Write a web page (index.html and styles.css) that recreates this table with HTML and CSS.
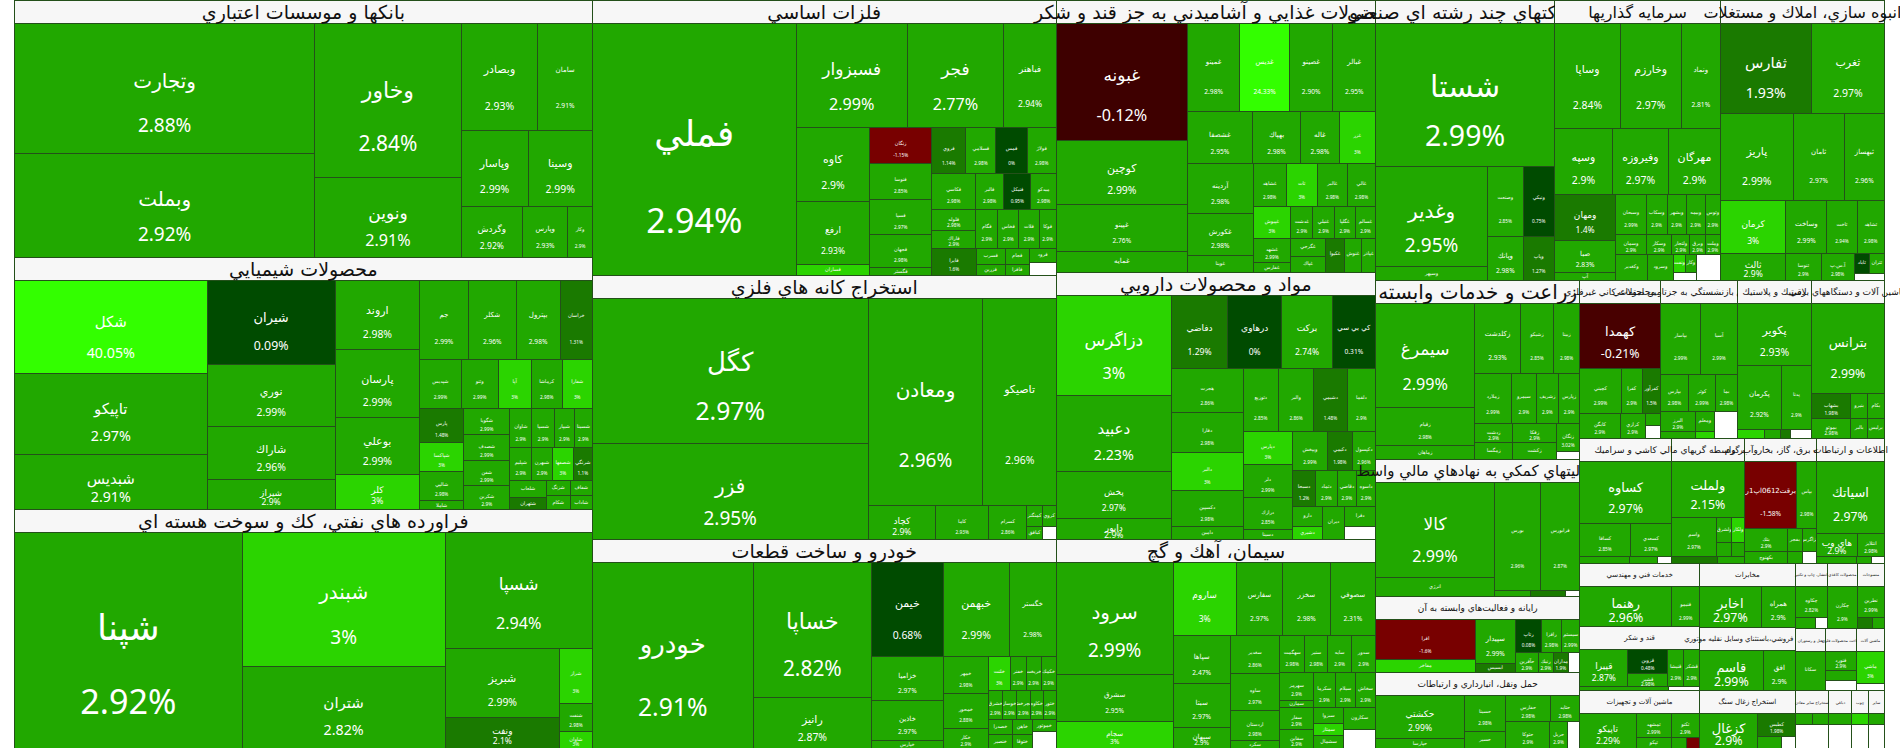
FILE: index.html
```html
<!DOCTYPE html>
<html lang="fa">
<head>
<meta charset="utf-8">
<title>نقشه بازار</title>
<link rel="stylesheet" href="styles.css">
</head>
<body>
<div class="map">

<!-- COLUMN 1 -->
<div class="c" style="flex:578">
  <div class="c sec" style="flex:257">
    <div class="hd h1"><span>بانکها و موسسات اعتباري</span></div>
    <div class="r bd">
      <div class="c" style="flex:301">
        <div class="t g s5" style="flex:130"><b>وتجارت</b><i>2.88%</i></div>
        <div class="t g s5" style="flex:104"><b>وبملت</b><i>2.92%</i></div>
      </div>
      <div class="c" style="flex:146">
        <div class="t g s4" style="flex:154"><b>وخاور</b><i>2.84%</i></div>
        <div class="t g s6" style="flex:80"><b>ونوين</b><i>2.91%</i></div>
      </div>
      <div class="c" style="flex:131">
        <div class="r" style="flex:107">
          <div class="t g s9" style="flex:77"><b>وبصادر</b><i>2.93%</i></div>
          <div class="t g s11" style="flex:54"><b>سامان</b><i>2.91%</i></div>
        </div>
        <div class="r" style="flex:76">
          <div class="t g s9" style="flex:67"><b>وپاسار</b><i>2.99%</i></div>
          <div class="t g s9" style="flex:64"><b>وسينا</b><i>2.99%</i></div>
        </div>
        <div class="r" style="flex:51">
          <div class="t g s10" style="flex:62"><b>وگردش</b><i>2.92%</i></div>
          <div class="t g s11" style="flex:45"><b>وپارس</b><i>2.93%</i></div>
          <div class="t g s12" style="flex:24"><b>وکار</b><i>2.9%</i></div>
        </div>
      </div>
    </div>
  </div>

  <div class="c sec" style="flex:252">
    <div class="hd h1"><span>محصولات شيميايي</span></div>
    <div class="r bd">
      <div class="c" style="flex:193">
        <div class="t b2 s7" style="flex:94"><b>شكل</b><i>40.05%</i></div>
        <div class="t g s7" style="flex:81"><b>تاپيكو</b><i>2.97%</i></div>
        <div class="t g s7" style="flex:55"><b>شبديس</b><i>2.91%</i></div>
      </div>
      <div class="c" style="flex:128">
        <div class="t d0 s8" style="flex:85"><b>شيران</b><i>0.09%</i></div>
        <div class="t g s9" style="flex:62"><b>نوري</b><i>2.99%</i></div>
        <div class="t g s9" style="flex:53"><b>شاراك</b><i>2.96%</i></div>
        <div class="t g s10" style="flex:30"><b>شيراز</b><i>2.9%</i></div>
      </div>
      <div class="c" style="flex:84">
        <div class="t g s9" style="flex:70"><b>اروند</b><i>2.98%</i></div>
        <div class="t g s9" style="flex:68"><b>پارسان</b><i>2.99%</i></div>
        <div class="t g s9" style="flex:57"><b>بوعلي</b><i>2.99%</i></div>
        <div class="t b s10" style="flex:35"><b>كلر</b><i>3%</i></div>
      </div>
      <div class="c" style="flex:173">
        <div class="r" style="flex:79">
          <div class="t g s11" style="flex:49"><b>جم</b><i>2.99%</i></div>
          <div class="t g s11" style="flex:48"><b>شكلر</b><i>2.96%</i></div>
          <div class="t g s11" style="flex:44"><b>بپترول</b><i>2.98%</i></div>
          <div class="t d1 s12" style="flex:32"><b>خراسان</b><i>1.31%</i></div>
        </div>
        <div class="r" style="flex:49">
          <div class="t g s12" style="flex:42"><b>شپديس</b><i>2.99%</i></div>
          <div class="t g s12" style="flex:37"><b>وثنو</b><i>2.99%</i></div>
          <div class="t b s12" style="flex:33"><b>آپا</b><i>3%</i></div>
          <div class="t g s12" style="flex:31"><b>كرماشا</b><i>2.98%</i></div>
          <div class="t b s12" style="flex:30"><b>شفارا</b><i>3%</i></div>
        </div>
        <div class="r" style="flex:102">
          <div class="c" style="flex:44">
            <div class="t d1 s12" style="flex:35"><b>پارس</b><i>1.48%</i></div>
            <div class="t b s12" style="flex:29"><b>شپاكسا</b><i>3%</i></div>
            <div class="t g s12" style="flex:30"><b>شالپي</b><i>2.98%</i></div>
            <div class="t g s12" style="flex:8"><b>شاملا</b><i></i></div>
          </div>
          <div class="c" style="flex:46">
            <div class="t g s12" style="flex:27"><b>شگويا</b><i>2.99%</i></div>
            <div class="t g s12" style="flex:26"><b>شصدف</b><i>2.99%</i></div>
            <div class="t g s12" style="flex:25"><b>شفن</b><i>2.99%</i></div>
            <div class="t g s12" style="flex:24"><b>شكربن</b><i>2.9%</i></div>
          </div>
          <div class="c" style="flex:83">
            <div class="r" style="flex:40">
              <div class="t g s12" style="flex:22"><b>شاوان</b><i>2.9%</i></div>
              <div class="t g s12" style="flex:23"><b>شسپا</b><i>2.9%</i></div>
              <div class="t g s12" style="flex:20"><b>شيپار</b><i>2.9%</i></div>
              <div class="t g s12" style="flex:18"><b>شسينا</b><i>2.9%</i></div>
            </div>
            <div class="r" style="flex:33">
              <div class="t g s12" style="flex:22"><b>شپليم</b><i>2.9%</i></div>
              <div class="t g s12" style="flex:21"><b>شبهرن</b><i>2.9%</i></div>
              <div class="t b s12" style="flex:21"><b>شصفها</b><i>3%</i></div>
              <div class="t d1 s12" style="flex:19"><b>شرنگي</b><i>1.1%</i></div>
            </div>
            <div class="r" style="flex:29">
              <div class="c" style="flex:37">
                <div class="t g s12" style="flex:17"><b>شلعاب</b><i></i></div>
                <div class="t d1 s12" style="flex:12"><b>شتهران</b><i></i></div>
              </div>
              <div class="c" style="flex:24">
                <div class="t g s12" style="flex:15"><b>شزنگ</b><i></i></div>
                <div class="t g s12" style="flex:14"><b>شكام</b><i></i></div>
              </div>
              <div class="c" style="flex:22">
                <div class="t g s12" style="flex:15"><b>شفاف</b><i></i></div>
                <div class="t g s12" style="flex:14"><b>شاداب</b><i></i></div>
              </div>
            </div>
          </div>
        </div>
      </div>
    </div>
  </div>

  <div class="c sec" style="flex:239">
    <div class="hd h1"><span>فراورده هاي نفتي، كك و سوخت هسته اي</span></div>
    <div class="r bd">
      <div class="t g s1" style="flex:228"><b>شپنا</b><i>2.92%</i></div>
      <div class="c" style="flex:203">
        <div class="t b s5" style="flex:135"><b>شبندر</b><i>3%</i></div>
        <div class="t g s7" style="flex:82"><b>شتران</b><i>2.82%</i></div>
      </div>
      <div class="c" style="flex:147">
        <div class="t g s6" style="flex:117"><b>شسپا</b><i>2.94%</i></div>
        <div class="r" style="flex:100">
          <div class="c" style="flex:115">
            <div class="t g s9" style="flex:69"><b>شبريز</b><i>2.99%</i></div>
            <div class="t d1 s10" style="flex:31"><b>ونفت</b><i>2.1%</i></div>
          </div>
          <div class="c" style="flex:32">
            <div class="t b s12" style="flex:55"><b>شراز</b><i>3%</i></div>
            <div class="t g s12" style="flex:28"><b>شنفت</b><i>2.98%</i></div>
            <div class="t b s12" style="flex:17"><b>شاوان</b><i>3%</i></div>
          </div>
        </div>
      </div>
    </div>
  </div>
</div>

<!-- COLUMN 2 -->
<div class="c" style="flex:464">
  <div class="c sec" style="flex:275">
    <div class="hd h1"><span>فلزات اساسي</span></div>
    <div class="r bd">
      <div class="t g s1" style="flex:204"><b>فملي</b><i>2.94%</i></div>
      <div class="c" style="flex:260">
        <div class="r" style="flex:104">
          <div class="t g s6" style="flex:111"><b>فسبزوار</b><i>2.99%</i></div>
          <div class="t g s6" style="flex:97"><b>فجر</b><i>2.77%</i></div>
          <div class="t g s10" style="flex:52"><b>فباهنر</b><i>2.94%</i></div>
        </div>
        <div class="r" style="flex:148">
          <div class="c" style="flex:73">
            <div class="t g s9" style="flex:75"><b>كاوه</b><i>2.9%</i></div>
            <div class="t g s10" style="flex:63"><b>ارفع</b><i>2.93%</i></div>
            <div class="t b s12" style="flex:10"><b>فسازان</b><i></i></div>
          </div>
          <div class="c" style="flex:62">
            <div class="t r1 s12" style="flex:36"><b>زنگان</b><i>-1.15%</i></div>
            <div class="t g s12" style="flex:36"><b>فنوسا</b><i>2.85%</i></div>
            <div class="t g s12" style="flex:36"><b>فسپا</b><i>2.97%</i></div>
            <div class="t g s12" style="flex:33"><b>فجهان</b><i>2.98%</i></div>
            <div class="t g s12" style="flex:7"><b>فگستر</b><i></i></div>
          </div>
          <div class="c" style="flex:125">
            <div class="r" style="flex:46">
              <div class="t d1 s12" style="flex:34"><b>فروي</b><i>1.14%</i></div>
              <div class="t g s12" style="flex:30"><b>فسلامي</b><i>2.98%</i></div>
              <div class="t d0 s12" style="flex:31"><b>فمس</b><i>0%</i></div>
              <div class="t g s12" style="flex:29"><b>فولاژ</b><i>2.98%</i></div>
            </div>
            <div class="r" style="flex:36">
              <div class="t g s12" style="flex:44"><b>فكاسي</b><i>2.98%</i></div>
              <div class="t g s12" style="flex:28"><b>فالبر</b><i>2.98%</i></div>
              <div class="t d0 s12" style="flex:27"><b>فنيكل</b><i>0.95%</i></div>
              <div class="t g s12" style="flex:25"><b>ميدكو</b><i>2.98%</i></div>
            </div>
            <div class="r" style="flex:39">
              <div class="c" style="flex:45">
                <div class="t g s12" style="flex:21"><b>فلوله</b><i>2.98%</i></div>
                <div class="t g s12" style="flex:18"><b>فاراك</b><i>2.9%</i></div>
              </div>
              <div class="t g s12" style="flex:22"><b>فگام</b><i>2.9%</i></div>
              <div class="t g s12" style="flex:21"><b>فخاس</b><i>2.9%</i></div>
              <div class="t g s12" style="flex:20"><b>فلات</b><i>2.9%</i></div>
              <div class="t g s12" style="flex:17"><b>فوكا</b><i>2.9%</i></div>
            </div>
            <div class="r" style="flex:27">
              <div class="t d1 s12" style="flex:45"><b>فايرا</b><i>1.6%</i></div>
              <div class="c" style="flex:29">
                <div class="t g s12" style="flex:16"><b>فسرب</b><i></i></div>
                <div class="t g s12" style="flex:11"><b>فزرين</b><i></i></div>
              </div>
              <div class="c" style="flex:24">
                <div class="t g s12" style="flex:16"><b>فجام</b><i></i></div>
                <div class="t g s12" style="flex:11"><b>فافزا</b><i></i></div>
              </div>
              <div class="c" style="flex:27">
                <div class="t g s12" style="flex:14"><b>فرود</b><i></i></div>
                <div class="w" style="flex:13"></div>
              </div>
            </div>
          </div>
        </div>
      </div>
    </div>
  </div>

  <div class="c sec" style="flex:264">
    <div class="hd h1"><span>استخراج كانه هاي فلزي</span></div>
    <div class="r bd">
      <div class="c" style="flex:276">
        <div class="t g s3" style="flex:146"><b>كگل</b><i>2.97%</i></div>
        <div class="t g s5" style="flex:96"><b>فزر</b><i>2.95%</i></div>
      </div>
      <div class="c" style="flex:188">
        <div class="r" style="flex:209">
          <div class="t g s5" style="flex:115"><b>ومعادن</b><i>2.96%</i></div>
          <div class="t g s9" style="flex:73"><b>تاصيكو</b><i>2.96%</i></div>
        </div>
        <div class="r" style="flex:33">
          <div class="t g s10" style="flex:68"><b>كچاد</b><i>2.9%</i></div>
          <div class="t g s12" style="flex:53"><b>كاما</b><i>2.93%</i></div>
          <div class="t g s12" style="flex:38"><b>كسرام</b><i>2.86%</i></div>
          <div class="c" style="flex:29">
            <div class="r" style="flex:20">
              <div class="t g s12" style="flex:15"><b>كمنگنز</b><i></i></div>
              <div class="t g s12" style="flex:14"><b>كروي</b><i></i></div>
            </div>
            <div class="r" style="flex:12">
              <div class="t g s12" style="flex:15"><b>كبافق</b><i></i></div>
              <div class="w" style="flex:14"></div>
            </div>
          </div>
        </div>
      </div>
    </div>
  </div>

  <div class="c sec" style="flex:209">
    <div class="hd h1"><span>خودرو و ساخت قطعات</span></div>
    <div class="r bd">
      <div class="t g s3" style="flex:161"><b>خودرو</b><i>2.91%</i></div>
      <div class="c" style="flex:118">
        <div class="t g s4" style="flex:136"><b>خساپا</b><i>2.82%</i></div>
        <div class="t g s9" style="flex:50"><b>رانيز</b><i>2.87%</i></div>
      </div>
      <div class="c" style="flex:185">
        <div class="r" style="flex:94">
          <div class="t d0 s9" style="flex:72"><b>خيمن</b><i>0.68%</i></div>
          <div class="t g s9" style="flex:66"><b>خبهمن</b><i>2.99%</i></div>
          <div class="t g s11" style="flex:47"><b>خگستر</b><i>2.98%</i></div>
        </div>
        <div class="r" style="flex:92">
          <div class="c" style="flex:72">
            <div class="t g s11" style="flex:45"><b>خزاميا</b><i>2.97%</i></div>
            <div class="t g s11" style="flex:40"><b>خاذين</b><i>2.97%</i></div>
            <div class="t g s12" style="flex:7"><b>خپارس</b><i></i></div>
          </div>
          <div class="c" style="flex:45">
            <div class="t g s12" style="flex:37"><b>خمهر</b><i>2.98%</i></div>
            <div class="t g s12" style="flex:35"><b>خمحور</b><i>2.88%</i></div>
            <div class="t g s12" style="flex:20"><b>خكار</b><i>2.9%</i></div>
          </div>
          <div class="c" style="flex:68">
            <div class="r" style="flex:34">
              <div class="t b s12" style="flex:22"><b>خلنت</b><i>3%</i></div>
              <div class="t g s12" style="flex:16"><b>خفنر</b><i>2.9%</i></div>
              <div class="t g s12" style="flex:15"><b>خريخت</b><i>2.9%</i></div>
              <div class="t g s12" style="flex:15"><b>خكمك</b><i>2.9%</i></div>
            </div>
            <div class="r" style="flex:29">
              <div class="t g s12" style="flex:14"><b>خشرق</b><i>2.9%</i></div>
              <div class="t g s12" style="flex:14"><b>خوساز</b><i>2.9%</i></div>
              <div class="t g s12" style="flex:14"><b>خچرخش</b><i>2.9%</i></div>
              <div class="t g s12" style="flex:13"><b>خكاوه</b><i>2.9%</i></div>
              <div class="t g s12" style="flex:13"><b>ختور</b><i>2.9%</i></div>
            </div>
            <div class="r" style="flex:29">
              <div class="c" style="flex:24">
                <div class="t g s12" style="flex:15"><b>خصدرا</b><i></i></div>
                <div class="t g s12" style="flex:14"><b>خنصير</b><i></i></div>
              </div>
              <div class="c" style="flex:20">
                <div class="t g s12" style="flex:15"><b>خاهن</b><i></i></div>
                <div class="t g s12" style="flex:14"><b>ختوقا</b><i></i></div>
              </div>
              <div class="c" style="flex:24">
                <div class="t g s12" style="flex:12"><b>خموتور</b><i></i></div>
                <div class="w" style="flex:17"></div>
              </div>
            </div>
          </div>
        </div>
      </div>
    </div>
  </div>
</div>

<!-- COLUMN 3 -->
<div class="c" style="flex:319">
  <div class="c sec" style="flex:272">
    <div class="hd h1"><span>محصولات غذايي و آشاميدني به جز قند و شكر</span></div>
    <div class="r bd">
      <div class="c" style="flex:130">
        <div class="t r0 s6" style="flex:118"><b>غبونه</b><i>-0.12%</i></div>
        <div class="t g s9" style="flex:64"><b>كوچين</b><i>2.99%</i></div>
        <div class="t g s11" style="flex:47"><b>غپينو</b><i>2.76%</i></div>
        <div class="t g s11" style="flex:20"><b>غمايه</b><i></i></div>
      </div>
      <div class="c" style="flex:187">
        <div class="r" style="flex:88">
          <div class="t g s11" style="flex:52"><b>غمينو</b><i>2.98%</i></div>
          <div class="t b2 s11" style="flex:49"><b>غديس</b><i>24.33%</i></div>
          <div class="t g s11" style="flex:43"><b>غصينو</b><i>2.90%</i></div>
          <div class="t g s11" style="flex:42"><b>غبالر</b><i>2.95%</i></div>
        </div>
        <div class="r" style="flex:52">
          <div class="t g s11" style="flex:65"><b>غشصفا</b><i>2.95%</i></div>
          <div class="t g s11" style="flex:48"><b>بهپاك</b><i>2.98%</i></div>
          <div class="t g s11" style="flex:38"><b>غاله</b><i>2.98%</i></div>
          <div class="t b s12" style="flex:36"><b>غزر</b><i>3%</i></div>
        </div>
        <div class="r" style="flex:109">
          <div class="c" style="flex:65">
            <div class="t g s11" style="flex:50"><b>آردينه</b><i>2.98%</i></div>
            <div class="t g s11" style="flex:43"><b>غكورش</b><i>2.98%</i></div>
            <div class="t g s12" style="flex:16"><b>غوينا</b><i></i></div>
          </div>
          <div class="c" style="flex:122">
            <div class="r" style="flex:43">
              <div class="t g s12" style="flex:33"><b>غشاهد</b><i>2.98%</i></div>
              <div class="t b s12" style="flex:31"><b>تات</b><i>3%</i></div>
              <div class="t g s12" style="flex:30"><b>غالبر</b><i>2.98%</i></div>
              <div class="t g s12" style="flex:28"><b>غالي</b><i>2.98%</i></div>
            </div>
            <div class="r" style="flex:32">
              <div class="t b s12" style="flex:38"><b>غپيوش</b><i>3%</i></div>
              <div class="t g s12" style="flex:22"><b>غدشت</b><i>2.9%</i></div>
              <div class="t g s12" style="flex:21"><b>غنيلي</b><i>2.9%</i></div>
              <div class="t g s12" style="flex:21"><b>غگلپا</b><i>2.9%</i></div>
              <div class="t g s12" style="flex:20"><b>غسالم</b><i>2.9%</i></div>
            </div>
            <div class="r" style="flex:34">
              <div class="c" style="flex:38">
                <div class="t g s12" style="flex:24"><b>غشهد</b><i>2.99%</i></div>
                <div class="t g s12" style="flex:10"><b>غفارس</b><i></i></div>
              </div>
              <div class="c" style="flex:35">
                <div class="t g s12" style="flex:18"><b>غگرجي</b><i></i></div>
                <div class="t g s12" style="flex:16"><b>غپاك</b><i></i></div>
              </div>
              <div class="t d1 s12" style="flex:19"><b>غكيوا</b><i></i></div>
              <div class="t g s12" style="flex:16"><b>غنوش</b><i></i></div>
              <div class="t g s12" style="flex:14"><b>غپاذر</b><i></i></div>
            </div>
          </div>
        </div>
      </div>
    </div>
  </div>

  <div class="c sec" style="flex:267">
    <div class="hd h1"><span>مواد و محصولات دارويي</span></div>
    <div class="r bd">
      <div class="c" style="flex:114">
        <div class="t b s6" style="flex:101"><b>دزاگرس</b><i>3%</i></div>
        <div class="t g s7" style="flex:76"><b>دعبيد</b><i>2.23%</i></div>
        <div class="t g s10" style="flex:47"><b>پخش</b><i>2.97%</i></div>
        <div class="t g s10" style="flex:20"><b>دابور</b><i>2.9%</i></div>
      </div>
      <div class="c" style="flex:203">
        <div class="r" style="flex:73">
          <div class="t d1 s10" style="flex:56"><b>دفاضي</b><i>1.29%</i></div>
          <div class="t d0 s10" style="flex:54"><b>درهاوي</b><i>0%</i></div>
          <div class="t g s10" style="flex:50"><b>بركت</b><i>2.74%</i></div>
          <div class="t d0 s11" style="flex:43"><b>كي بي سي</b><i>0.31%</i></div>
        </div>
        <div class="r" style="flex:171">
          <div class="c" style="flex:71">
            <div class="t g s12" style="flex:44"><b>هجرت</b><i>2.86%</i></div>
            <div class="t g s12" style="flex:40"><b>دفارا</b><i>2.98%</i></div>
            <div class="t b s12" style="flex:39"><b>دالبر</b><i>3%</i></div>
            <div class="t g s12" style="flex:36"><b>دكسپين</b><i>2.98%</i></div>
            <div class="t g s12" style="flex:12"><b>دامين</b><i></i></div>
          </div>
          <div class="c" style="flex:132">
            <div class="r" style="flex:63">
              <div class="t g s12" style="flex:35"><b>دتوزيع</b><i>2.85%</i></div>
              <div class="t g s12" style="flex:35"><b>والبر</b><i>2.86%</i></div>
              <div class="t d1 s12" style="flex:33"><b>دشيمي</b><i>1.48%</i></div>
              <div class="t g s12" style="flex:28"><b>دلقما</b><i>2.9%</i></div>
            </div>
            <div class="r" style="flex:108">
              <div class="c" style="flex:49">
                <div class="t b s12" style="flex:33"><b>دپارس</b><i>3%</i></div>
                <div class="t g s12" style="flex:33"><b>دلر</b><i>2.99%</i></div>
                <div class="t g s12" style="flex:32"><b>درازك</b><i>2.85%</i></div>
                <div class="t g s12" style="flex:9"><b>دسينا</b><i></i></div>
              </div>
              <div class="c" style="flex:83">
                <div class="r" style="flex:39">
                  <div class="t g s12" style="flex:35"><b>ويپخش</b><i>2.99%</i></div>
                  <div class="t d1 s12" style="flex:25"><b>دكيمي</b><i>1.98%</i></div>
                  <div class="t g s12" style="flex:23"><b>دكپسول</b><i>2.96%</i></div>
                </div>
                <div class="r" style="flex:35">
                  <div class="t d1 s12" style="flex:23"><b>دسبحا</b><i>1.2%</i></div>
                  <div class="t g s12" style="flex:22"><b>دتماد</b><i>2.9%</i></div>
                  <div class="t g s12" style="flex:19"><b>دقاضي</b><i>2.9%</i></div>
                  <div class="t g s12" style="flex:19"><b>داسوه</b><i>2.9%</i></div>
                </div>
                <div class="r" style="flex:33">
                  <div class="c" style="flex:30">
                    <div class="t g s12" style="flex:20"><b>دارو</b><i></i></div>
                    <div class="t b s12" style="flex:12"><b>دشيري</b><i></i></div>
                  </div>
                  <div class="t g s12" style="flex:22"><b>ديران</b><i></i></div>
                  <div class="c" style="flex:31">
                    <div class="t g s12" style="flex:20"><b>دفرا</b><i></i></div>
                    <div class="w" style="flex:12"></div>
                  </div>
                </div>
              </div>
            </div>
          </div>
        </div>
      </div>
    </div>
  </div>

  <div class="c sec" style="flex:209">
    <div class="hd h1"><span>سيمان، آهك و گچ</span></div>
    <div class="r bd">
      <div class="c" style="flex:116">
        <div class="t g s5" style="flex:113"><b>سرود</b><i>2.99%</i></div>
        <div class="t g s11" style="flex:47"><b>سشرق</b><i>2.95%</i></div>
        <div class="t b s11" style="flex:26"><b>سجام</b><i>3%</i></div>
      </div>
      <div class="c" style="flex:202">
        <div class="r" style="flex:73">
          <div class="t b s10" style="flex:63"><b>ساروم</b><i>3%</i></div>
          <div class="t g s11" style="flex:46"><b>سفارس</b><i>2.97%</i></div>
          <div class="t g s11" style="flex:47"><b>سخزر</b><i>2.98%</i></div>
          <div class="t g s11" style="flex:45"><b>سصوفي</b><i>2.31%</i></div>
        </div>
        <div class="r" style="flex:113">
          <div class="c" style="flex:57">
            <div class="t g s11" style="flex:48"><b>سپاها</b><i>2.47%</i></div>
            <div class="t g s11" style="flex:44"><b>سبتا</b><i>2.97%</i></div>
            <div class="t g s11" style="flex:21"><b>سبهان</b><i>2.9%</i></div>
          </div>
          <div class="c" style="flex:49">
            <div class="t g s12" style="flex:38"><b>سغدير</b><i>2.86%</i></div>
            <div class="t g s12" style="flex:38"><b>ساوه</b><i>2.97%</i></div>
            <div class="t g s12" style="flex:30"><b>اردستان</b><i>2.98%</i></div>
            <div class="t g s12" style="flex:7"><b>سكرد</b><i></i></div>
          </div>
          <div class="c" style="flex:96">
            <div class="r" style="flex:37">
              <div class="t g s12" style="flex:25"><b>سهگمت</b><i>2.98%</i></div>
              <div class="t g s12" style="flex:23"><b>سنير</b><i>2.98%</i></div>
              <div class="t g s12" style="flex:24"><b>سايه</b><i>2.9%</i></div>
              <div class="t g s12" style="flex:24"><b>سدور</b><i>2.9%</i></div>
            </div>
            <div class="r" style="flex:35">
              <div class="c" style="flex:34">
                <div class="t g s12" style="flex:28"><b>سهرمز</b><i>2.9%</i></div>
                <div class="t g s12" style="flex:7"><b>سمازن</b><i></i></div>
              </div>
              <div class="t g s12" style="flex:22"><b>سكرما</b><i>2.9%</i></div>
              <div class="t g s12" style="flex:20"><b>سيلام</b><i>2.9%</i></div>
              <div class="t g s12" style="flex:20"><b>سخاش</b><i>2.9%</i></div>
            </div>
            <div class="r" style="flex:41">
              <div class="c" style="flex:34">
                <div class="t g s12" style="flex:22"><b>سفار</b><i>2.9%</i></div>
                <div class="t g s12" style="flex:19"><b>سقاين</b><i>2.9%</i></div>
              </div>
              <div class="c" style="flex:30">
                <div class="t g s12" style="flex:16"><b>سبزوا</b><i></i></div>
                <div class="t b s12" style="flex:12"><b>سمتاز</b><i></i></div>
                <div class="t g s12" style="flex:13"><b>سشمال</b><i></i></div>
              </div>
              <div class="c" style="flex:32">
                <div class="t g s12" style="flex:22"><b>سكارون</b><i></i></div>
                <div class="w" style="flex:19"></div>
              </div>
            </div>
          </div>
        </div>
      </div>
    </div>
  </div>
</div>

<!-- COLUMN 4 -->
<div class="c" style="flex:509">
  <div class="r" style="flex:280">
    <div class="c sec" style="flex:179">
      <div class="hd h1"><span>شرکتهاي چند رشته اي صنعتي</span></div>
      <div class="c bd">
        <div class="t g s2" style="flex:143"><b>شستا</b><i>2.99%</i></div>
        <div class="r" style="flex:114">
          <div class="c" style="flex:113">
            <div class="t g s5" style="flex:101"><b>وغدير</b><i>2.95%</i></div>
            <div class="t g s12" style="flex:13"><b>وسپهر</b><i></i></div>
          </div>
          <div class="c" style="flex:35">
            <div class="t g s12" style="flex:70"><b>وصنعت</b><i>2.85%</i></div>
            <div class="t g s11" style="flex:44"><b>وپانك</b><i>2.98%</i></div>
          </div>
          <div class="c" style="flex:31">
            <div class="t d0 s12" style="flex:70"><b>ونيكي</b><i>0.75%</i></div>
            <div class="t d1 s12" style="flex:44"><b>وپاپ</b><i>1.27%</i></div>
          </div>
        </div>
      </div>
    </div>
    <div class="c sec" style="flex:166">
      <div class="hd h1b"><span>سرمايه گذاريها</span></div>
      <div class="c bd">
        <div class="r" style="flex:105">
          <div class="t g s9" style="flex:66"><b>وساپا</b><i>2.84%</i></div>
          <div class="t g s9" style="flex:61"><b>وخارزم</b><i>2.97%</i></div>
          <div class="t g s11" style="flex:39"><b>ونماد</b><i>2.81%</i></div>
        </div>
        <div class="r" style="flex:66">
          <div class="t g s9" style="flex:58"><b>وسپه</b><i>2.9%</i></div>
          <div class="t g s9" style="flex:56"><b>وفيروزه</b><i>2.97%</i></div>
          <div class="t g s9" style="flex:52"><b>مهرگان</b><i>2.9%</i></div>
        </div>
        <div class="r" style="flex:86">
          <div class="c" style="flex:61">
            <div class="t d1 s10" style="flex:46"><b>ومهان</b><i>1.4%</i></div>
            <div class="t g s11" style="flex:32"><b>صبا</b><i>2.83%</i></div>
            <div class="t g s12" style="flex:8"><b>آپ</b><i></i></div>
          </div>
          <div class="c" style="flex:105">
            <div class="r" style="flex:40">
              <div class="t g s12" style="flex:31"><b>وسبحان</b><i>2.99%</i></div>
              <div class="t g s12" style="flex:21"><b>وسكاب</b><i>2.9%</i></div>
              <div class="t g s12" style="flex:19"><b>وبشهر</b><i>2.9%</i></div>
              <div class="t g s12" style="flex:19"><b>وبيمه</b><i>2.9%</i></div>
              <div class="t g s12" style="flex:15"><b>وتوس</b><i>2.9%</i></div>
            </div>
            <div class="r" style="flex:20">
              <div class="t g s12" style="flex:31"><b>وسمان</b><i>2.9%</i></div>
              <div class="t g s12" style="flex:26"><b>وسكار</b><i>2.9%</i></div>
              <div class="t g s12" style="flex:18"><b>ولتجار</b><i>2.9%</i></div>
              <div class="t g s12" style="flex:15"><b>وبرق</b><i>2.9%</i></div>
              <div class="t g s12" style="flex:15"><b>وملت</b><i>2.9%</i></div>
            </div>
            <div class="r" style="flex:26">
              <div class="t g s12" style="flex:32"><b>وكغدير</b><i></i></div>
              <div class="t g s12" style="flex:26"><b>وسرود</b><i></i></div>
              <div class="c" style="flex:23">
                <div class="r" style="flex:18">
                  <div class="t b s12" style="flex:12"><b>ونفت</b><i></i></div>
                  <div class="t g s12" style="flex:11"><b>وكار</b><i></i></div>
                </div>
                <div class="w" style="flex:8"></div>
              </div>
              <div class="w" style="flex:24"></div>
            </div>
          </div>
        </div>
      </div>
    </div>
    <div class="c sec" style="flex:164">
      <div class="hd h1b"><span>انبوه سازي، املاك و مستغلات</span></div>
      <div class="c bd">
        <div class="r" style="flex:90">
          <div class="t d1 s7" style="flex:91"><b>ثفارس</b><i>1.93%</i></div>
          <div class="t g s9" style="flex:73"><b>ثغرب</b><i>2.97%</i></div>
        </div>
        <div class="r" style="flex:88">
          <div class="t g s9" style="flex:73"><b>پاريز</b><i>2.99%</i></div>
          <div class="t g s11" style="flex:51"><b>ثامان</b><i>2.97%</i></div>
          <div class="t g s11" style="flex:40"><b>ثبهساز</b><i>2.96%</i></div>
        </div>
        <div class="r" style="flex:52">
          <div class="t b s10" style="flex:66"><b>كرمان</b><i>3%</i></div>
          <div class="t g s11" style="flex:41"><b>وساخت</b><i>2.99%</i></div>
          <div class="t g s12" style="flex:30"><b>ثاخت</b><i>2.94%</i></div>
          <div class="t g s12" style="flex:27"><b>ثشاهد</b><i>2.98%</i></div>
        </div>
        <div class="r" style="flex:27">
          <div class="t g s10" style="flex:66"><b>ثالث</b><i>2.9%</i></div>
          <div class="t g s12" style="flex:35"><b>ثنوسا</b><i>2.9%</i></div>
          <div class="t g s12" style="flex:33"><b>آ.س.پ</b><i>2.98%</i></div>
          <div class="c" style="flex:30">
            <div class="r" style="flex:20">
              <div class="t d0 s12" style="flex:15"><b>ثاباد</b><i></i></div>
              <div class="t g s12" style="flex:15"><b>ثتران</b><i></i></div>
            </div>
            <div class="w" style="flex:7"></div>
          </div>
        </div>
      </div>
    </div>
  </div>

  <div class="r" style="flex:468">
    <div class="c" style="flex:204">
      <div class="c sec" style="flex:179">
        <div class="hd hx"><span>زراعت و خدمات وابسته</span></div>
        <div class="r bd">
          <div class="c" style="flex:99">
            <div class="t g s6" style="flex:105"><b>سيمرغ</b><i>2.99%</i></div>
            <div class="t g s12" style="flex:38"><b>زقيام</b><i>2.98%</i></div>
            <div class="t g s12" style="flex:13"><b>زماهان</b><i></i></div>
          </div>
          <div class="c" style="flex:105">
            <div class="r" style="flex:70">
              <div class="t g s11" style="flex:46"><b>زكلدشت</b><i>2.93%</i></div>
              <div class="t g s12" style="flex:33"><b>زشيكو</b><i>2.85%</i></div>
              <div class="t g s12" style="flex:26"><b>زبينا</b><i>2.98%</i></div>
            </div>
            <div class="r" style="flex:51">
              <div class="t g s12" style="flex:37"><b>زملارد</b><i>2.99%</i></div>
              <div class="t g s12" style="flex:25"><b>سيمرو</b><i>2.9%</i></div>
              <div class="t g s12" style="flex:22"><b>زشريف</b><i>2.9%</i></div>
              <div class="t g s12" style="flex:21"><b>زپارس</b><i>2.9%</i></div>
            </div>
            <div class="r" style="flex:35">
              <div class="c" style="flex:38">
                <div class="t g s12" style="flex:19"><b>زدشت</b><i>2.9%</i></div>
                <div class="t g s12" style="flex:16"><b>زمگسا</b><i></i></div>
              </div>
              <div class="c" style="flex:44">
                <div class="t g s12" style="flex:19"><b>زفكا</b><i>2.9%</i></div>
                <div class="t g s12" style="flex:16"><b>زكشت</b><i></i></div>
              </div>
              <div class="c" style="flex:23">
                <div class="t g s12" style="flex:28"><b>زنگان</b><i>3.02%</i></div>
                <div class="w" style="flex:7"></div>
              </div>
            </div>
          </div>
        </div>
      </div>
      <div class="c sec" style="flex:138">
        <div class="hd h2"><span>فعاليتهاي كمكي به نهادهاي مالي واسط</span></div>
        <div class="r bd">
          <div class="c" style="flex:119">
            <div class="t g s6" style="flex:96"><b>كالا</b><i>2.99%</i></div>
            <div class="t g s12" style="flex:19"><b>انرژي</b><i></i></div>
          </div>
          <div class="c" style="flex:85">
            <div class="r" style="flex:109">
              <div class="t g s12" style="flex:46"><b>بورس</b><i>2.96%</i></div>
              <div class="t g s12" style="flex:39"><b>فرابورس</b><i>2.87%</i></div>
            </div>
            <div class="r" style="flex:6">
              <div class="t g s12" style="flex:36"><b></b><i></i></div>
              <div class="t d1 s12" style="flex:35"><b></b><i></i></div>
              <div class="w" style="flex:14"></div>
            </div>
          </div>
        </div>
      </div>
      <div class="c sec" style="flex:75">
        <div class="hd h3"><span>رايانه و فعاليت‌هاي وابسته به آن</span></div>
        <div class="r bd">
          <div class="c" style="flex:100">
            <div class="t r1 s12" style="flex:41"><b>افرا</b><i>-1.6%</i></div>
            <div class="t b s12" style="flex:12"><b>مفاخر</b><i></i></div>
          </div>
          <div class="c" style="flex:40">
            <div class="t g s11" style="flex:45"><b>سپيدار</b><i>2.99%</i></div>
            <div class="t d1 s12" style="flex:8"><b>ابسيس</b><i></i></div>
          </div>
          <div class="c" style="flex:64">
            <div class="r" style="flex:33">
              <div class="t d0 s12" style="flex:26"><b>رتاپ</b><i>0.08%</i></div>
              <div class="t g s12" style="flex:20"><b>رافزا</b><i>2.98%</i></div>
              <div class="t g s12" style="flex:18"><b>سيستم</b><i>2.99%</i></div>
            </div>
            <div class="r" style="flex:20">
              <div class="t g s12" style="flex:23"><b>حآفرين</b><i>2.9%</i></div>
              <div class="t g s12" style="flex:15"><b>رنيك</b><i>2.9%</i></div>
              <div class="t d1 s12" style="flex:15"><b>مداران</b><i>1.9%</i></div>
              <div class="w" style="flex:11"></div>
            </div>
          </div>
        </div>
      </div>
      <div class="c sec" style="flex:76">
        <div class="hd h3"><span>حمل ونقل، انبارداري و ارتباطات</span></div>
        <div class="r bd">
          <div class="c" style="flex:89">
            <div class="t g s10" style="flex:44"><b>حكشتي</b><i>2.99%</i></div>
            <div class="t g s12" style="flex:10"><b>حپارسا</b><i></i></div>
          </div>
          <div class="c" style="flex:41">
            <div class="t g s12" style="flex:37"><b>حسينا</b><i>2.98%</i></div>
            <div class="t g s12" style="flex:17"><b>حسير</b><i></i></div>
          </div>
          <div class="c" style="flex:74">
            <div class="r" style="flex:27">
              <div class="t g s12" style="flex:45"><b>حفارس</b><i>2.98%</i></div>
              <div class="t g s12" style="flex:29"><b>حتايد</b><i>2.98%</i></div>
            </div>
            <div class="r" style="flex:27">
              <div class="t g s12" style="flex:45"><b>حتوكا</b><i>2.9%</i></div>
              <div class="t g s12" style="flex:17"><b>حريل</b><i>2.9%</i></div>
              <div class="w" style="flex:12"></div>
            </div>
          </div>
        </div>
      </div>
    </div>

    <div class="c" style="flex:305">
      <div class="r" style="flex:157">
        <div class="c sec" style="flex:81">
          <div class="hd h3"><span>ساير محصولات كاني غيرفلزي</span></div>
          <div class="c bd">
            <div class="t r0b s8" style="flex:65"><b>كهمدا</b><i>-0.21%</i></div>
            <div class="r" style="flex:45">
              <div class="t g s12" style="flex:42"><b>كچيني</b><i>2.99%</i></div>
              <div class="t g s12" style="flex:21"><b>كفرا</b><i>2.9%</i></div>
              <div class="t d1 s12" style="flex:18"><b>كفرآور</b><i>1.5%</i></div>
            </div>
            <div class="r" style="flex:24">
              <div class="t g s12" style="flex:41"><b>كابگن</b><i>2.9%</i></div>
              <div class="t g s12" style="flex:25"><b>كرازي</b><i>2.9%</i></div>
              <div class="c" style="flex:15">
                <div class="t g s12" style="flex:12"><b></b><i></i></div>
                <div class="w" style="flex:12"></div>
              </div>
            </div>
          </div>
        </div>
        <div class="c sec" style="flex:77">
          <div class="hd h3"><span>بيمه وصندوق بازنشستگي به جزتامين اجتماعي</span></div>
          <div class="c bd">
            <div class="r" style="flex:71">
              <div class="t g s12" style="flex:40"><b>بپاسار</b><i>2.99%</i></div>
              <div class="t g s12" style="flex:37"><b>آسيا</b><i>2.99%</i></div>
            </div>
            <div class="r" style="flex:37">
              <div class="t g s12" style="flex:28"><b>بپارس</b><i>2.98%</i></div>
              <div class="t g s12" style="flex:27"><b>كوثر</b><i>2.99%</i></div>
              <div class="t g s12" style="flex:22"><b>بما</b><i>2.98%</i></div>
            </div>
            <div class="r" style="flex:26">
              <div class="c" style="flex:35">
                <div class="t g s12" style="flex:20"><b>البرز</b><i>2.9%</i></div>
                <div class="t g s12" style="flex:6"><b></b><i></i></div>
              </div>
              <div class="c" style="flex:19">
                <div class="t g s12" style="flex:20"><b>ومعلم</b><i></i></div>
                <div class="t b s12" style="flex:6"><b></b><i></i></div>
              </div>
              <div class="w" style="flex:23"></div>
            </div>
          </div>
        </div>
        <div class="c sec" style="flex:74">
          <div class="hd h3"><span>لاستيك و پلاستيك</span></div>
          <div class="c bd">
            <div class="t g s9" style="flex:62"><b>پكوير</b><i>2.93%</i></div>
            <div class="r" style="flex:64">
              <div class="t g s11" style="flex:44"><b>پكرمان</b><i>2.92%</i></div>
              <div class="t g s12" style="flex:30"><b>پدنا</b><i>2.9%</i></div>
            </div>
            <div class="r" style="flex:8">
              <div class="t b s12" style="flex:27"><b></b><i></i></div>
              <div class="t g s12" style="flex:16"><b></b><i></i></div>
              <div class="t d1 s12" style="flex:10"><b></b><i></i></div>
              <div class="w" style="flex:21"></div>
            </div>
          </div>
        </div>
        <div class="c sec" style="flex:73">
          <div class="hd h3"><span>ماشين آلات و دستگاههاي برقي</span></div>
          <div class="c bd">
            <div class="t g s8" style="flex:90"><b>بترانس</b><i>2.99%</i></div>
            <div class="r" style="flex:44">
              <div class="c" style="flex:40">
                <div class="t d1 s12" style="flex:25"><b>بشهاب</b><i>1.98%</i></div>
                <div class="t g s12" style="flex:19"><b>بموتو</b><i>2.98%</i></div>
              </div>
              <div class="c" style="flex:16">
                <div class="t g s12" style="flex:25"><b>بنيرو</b><i></i></div>
                <div class="t g s12" style="flex:19"><b>بالبر</b><i></i></div>
              </div>
              <div class="c" style="flex:17">
                <div class="t g s12" style="flex:25"><b>بكام</b><i></i></div>
                <div class="t g s12" style="flex:19"><b>برليس</b><i></i></div>
              </div>
            </div>
          </div>
        </div>
      </div>

      <div class="c" style="flex:311">
        <div class="r" style="flex:125">
          <div class="c sec" style="flex:92">
            <div class="hd h3"><span>كاشي و سراميك</span></div>
            <div class="c bd">
              <div class="t g s8" style="flex:63"><b>كساوه</b><i>2.97%</i></div>
              <div class="r" style="flex:33">
                <div class="t g s12" style="flex:51"><b>كسافا</b><i>2.85%</i></div>
                <div class="t g s12" style="flex:41"><b>كسعدي</b><i>2.97%</i></div>
              </div>
              <div class="r" style="flex:6">
                <div class="t g s12" style="flex:51"><b></b><i></i></div>
                <div class="t g s12" style="flex:28"><b></b><i></i></div>
                <div class="w" style="flex:13"></div>
              </div>
            </div>
          </div>
          <div class="c sec" style="flex:73">
            <div class="hd h3"><span>ساير واسطه گريهاي مالي</span></div>
            <div class="c bd">
              <div class="t g s8" style="flex:57"><b>ولملت</b><i>2.15%</i></div>
              <div class="r" style="flex:39">
                <div class="t g s12" style="flex:46"><b>واسم</b><i>2.97%</i></div>
                <div class="c" style="flex:15">
                  <div class="t g s12" style="flex:26"><b>ولشرق</b><i></i></div>
                  <div class="t g s12" style="flex:13"><b></b><i></i></div>
                </div>
                <div class="c" style="flex:12">
                  <div class="t b s12" style="flex:26"><b>ولكار</b><i></i></div>
                  <div class="t g s12" style="flex:13"><b></b><i></i></div>
                </div>
              </div>
              <div class="r" style="flex:6">
                <div class="t d1 s12" style="flex:46"><b></b><i></i></div>
                <div class="t g s12" style="flex:27"><b></b><i></i></div>
              </div>
            </div>
          </div>
          <div class="c sec" style="flex:72">
            <div class="hd h3"><span>عرضه برق، گاز، بخاروآب گرم</span></div>
            <div class="c bd">
              <div class="r" style="flex:69">
                <div class="t r1 s11" style="flex:53"><b>برقت0612اپ1ر</b><i>-1.58%</i></div>
                <div class="t g s12" style="flex:19"><b>بپاس</b><i>2.98%</i></div>
              </div>
              <div class="r" style="flex:34">
                <div class="c" style="flex:44">
                  <div class="t g s12" style="flex:23"><b>بتك</b><i>2.9%</i></div>
                  <div class="t g s12" style="flex:11"><b>بكهنوج</b><i></i></div>
                </div>
                <div class="c" style="flex:14">
                  <div class="t g s12" style="flex:23"><b>بفجر</b><i></i></div>
                  <div class="t g s12" style="flex:11"><b></b><i></i></div>
                </div>
                <div class="c" style="flex:14">
                  <div class="t g s12" style="flex:23"><b>بزاگرس</b><i></i></div>
                  <div class="w" style="flex:11"></div>
                </div>
              </div>
            </div>
          </div>
          <div class="c sec" style="flex:68">
            <div class="hd h3"><span>اطلاعات و ارتباطات</span></div>
            <div class="c bd">
              <div class="t g s8" style="flex:74"><b>اسياتك</b><i>2.97%</i></div>
              <div class="r" style="flex:23">
                <div class="t g s10" style="flex:41"><b>هاي وب</b><i>2.9%</i></div>
                <div class="t g s12" style="flex:27"><b>انتلايز</b><i>2.98%</i></div>
              </div>
              <div class="r" style="flex:6">
                <div class="t g s12" style="flex:41"><b></b><i></i></div>
                <div class="t g s12" style="flex:14"><b></b><i></i></div>
                <div class="w" style="flex:13"></div>
              </div>
            </div>
          </div>
        </div>

        <div class="r" style="flex:186">
          <div class="c" style="flex:120">
            <div class="c sec" style="flex:64">
              <div class="hd h4"><span>خدمات فني و مهندسي</span></div>
              <div class="r bd">
                <div class="t g s8" style="flex:93"><b>رهنما</b><i>2.96%</i></div>
                <div class="t g s12" style="flex:27"><b>فنيمو</b><i>2.99%</i></div>
              </div>
            </div>
            <div class="c sec" style="flex:64">
              <div class="hd h4"><span>قند و شكر</span></div>
              <div class="c bd">
                <div class="r" style="flex:39">
                  <div class="t g s10" style="flex:49"><b>قپيرا</b><i>2.87%</i></div>
                  <div class="c" style="flex:40">
                    <div class="t d0 s12" style="flex:25"><b>قزوين</b><i>0.48%</i></div>
                    <div class="t g s12" style="flex:14"><b>قشير</b><i>2.98%</i></div>
                  </div>
                  <div class="t g s12" style="flex:16"><b>قنيشا</b><i>2.9%</i></div>
                  <div class="t g s12" style="flex:15"><b>قشكر</b><i>2.9%</i></div>
                </div>
                <div class="r" style="flex:3">
                  <div class="t g s12" style="flex:89"><b></b><i></i></div>
                  <div class="w" style="flex:31"></div>
                </div>
              </div>
            </div>
            <div class="c sec" style="flex:58">
              <div class="hd h4"><span>ماشين آلات و تجهيزات</span></div>
              <div class="r bd">
                <div class="t g s10" style="flex:57"><b>تاپيكو</b><i>2.29%</i></div>
                <div class="c" style="flex:35">
                  <div class="t g s12" style="flex:25"><b>تمشهد</b><i>2.99%</i></div>
                  <div class="t g s12" style="flex:11"><b>تپكو</b><i></i></div>
                </div>
                <div class="c" style="flex:28">
                  <div class="t g s12" style="flex:25"><b>تكنو</b><i>2.9%</i></div>
                  <div class="r" style="flex:11">
                    <div class="t g s12" style="flex:15"><b></b><i></i></div>
                    <div class="t r1 s12" style="flex:13"><b></b><i></i></div>
                  </div>
                </div>
              </div>
            </div>
          </div>
          <div class="c" style="flex:96">
            <div class="c sec" style="flex:65">
              <div class="hd h4"><span>مخابرات</span></div>
              <div class="r bd">
                <div class="t g s8" style="flex:62"><b>اخابر</b><i>2.97%</i></div>
                <div class="t g s11" style="flex:34"><b>همراه</b><i>2.9%</i></div>
              </div>
            </div>
            <div class="c sec" style="flex:63">
              <div class="hd h4"><span>خرده فروشي،باستثناي وسايل نقليه موتوري</span></div>
              <div class="r bd">
                <div class="t g s8" style="flex:64"><b>قاسم</b><i>2.99%</i></div>
                <div class="t g s11" style="flex:32"><b>افق</b><i>2.9%</i></div>
              </div>
            </div>
            <div class="c sec" style="flex:58">
              <div class="hd h4"><span>استخراج زغال سنگ</span></div>
              <div class="r bd">
                <div class="t g s8" style="flex:58"><b>كزغال</b><i>2.9%</i></div>
                <div class="c" style="flex:37">
                  <div class="t d1 s12" style="flex:23"><b>كطبس</b><i>1.98%</i></div>
                  <div class="r" style="flex:12">
                    <div class="t g s12" style="flex:24"><b></b><i></i></div>
                    <div class="w" style="flex:13"></div>
                  </div>
                </div>
              </div>
            </div>
          </div>
          <div class="c" style="flex:89">
            <div class="r" style="flex:66">
              <div class="c sec" style="flex:32">
                <div class="hd h5"><span>انتشار، چاپ و تكثير</span></div>
                <div class="c bd">
                  <div class="t g s12" style="flex:33"><b>چكاوه</b><i>2.82%</i></div>
                  <div class="r" style="flex:11">
                    <div class="t g s12" style="flex:20"><b></b><i></i></div>
                    <div class="w" style="flex:12"></div>
                  </div>
                </div>
              </div>
              <div class="c sec" style="flex:30">
                <div class="hd h5"><span>محصولات كاغذي</span></div>
                <div class="c bd">
                  <div class="t g s12" style="flex:44"><b>چكارن</b><i>2.9%</i></div>
                </div>
              </div>
              <div class="c sec" style="flex:27">
                <div class="hd h5"><span>منسوجات</span></div>
                <div class="c bd">
                  <div class="t g s12" style="flex:33"><b>نطرين</b><i>2.99%</i></div>
                  <div class="r" style="flex:11">
                    <div class="t d1 s12" style="flex:15"><b></b><i></i></div>
                    <div class="t g s12" style="flex:12"><b></b><i></i></div>
                  </div>
                </div>
              </div>
            </div>
            <div class="r" style="flex:62">
              <div class="c sec" style="flex:30">
                <div class="hd h5"><span>هتل و رستوران</span></div>
                <div class="c bd">
                  <div class="t g s12" style="flex:40"><b>سكانا</b><i></i></div>
                </div>
              </div>
              <div class="c sec" style="flex:31">
                <div class="hd h5"><span>ساخت محصولات فلزي</span></div>
                <div class="c bd">
                  <div class="t g s12" style="flex:20"><b>فنورد</b><i>2.9%</i></div>
                  <div class="t g s12" style="flex:10"><b></b><i></i></div>
                  <div class="w" style="flex:10"></div>
                </div>
              </div>
              <div class="c sec" style="flex:28">
                <div class="hd h5"><span>ماشين آلات</span></div>
                <div class="c bd">
                  <div class="t b s12" style="flex:33"><b>ماشي</b><i>3%</i></div>
                  <div class="w" style="flex:7"></div>
                </div>
              </div>
            </div>
            <div class="r" style="flex:58">
              <div class="c sec" style="flex:34">
                <div class="hd h5"><span>استخراج ساير معادن</span></div>
                <div class="c bd">
                  <div class="r" style="flex:10">
                    <div class="t g s12" style="flex:17"><b></b><i></i></div>
                    <div class="t g s12" style="flex:17"><b></b><i></i></div>
                  </div>
                  <div class="w" style="flex:25"></div>
                </div>
              </div>
              <div class="c sec" style="flex:23">
                <div class="hd h5"><span>دباغي</span></div>
                <div class="c bd">
                  <div class="t g s12" style="flex:10"><b></b><i></i></div>
                  <div class="w" style="flex:25"></div>
                </div>
              </div>
              <div class="c sec" style="flex:16">
                <div class="hd h5"><span>چوب</span></div>
                <div class="c bd">
                  <div class="t b s12" style="flex:10"><b></b><i></i></div>
                  <div class="w" style="flex:25"></div>
                </div>
              </div>
              <div class="c sec" style="flex:16">
                <div class="hd h5"><span>ساير</span></div>
                <div class="c bd">
                  <div class="t g s12" style="flex:10"><b></b><i></i></div>
                  <div class="w" style="flex:25"></div>
                </div>
              </div>
            </div>
          </div>
        </div>
      </div>
    </div>
  </div>
</div>

</div>
</body>
</html>
```

FILE: styles.css
```css
:root {
  --ln: #24501a;
}

html, body {
  margin: 0;
  padding: 0;
  background: #ffffff;
  font-family: "DejaVu Sans", "Noto Sans", sans-serif;
}

.map {
  display: flex;
  flex-direction: row;
  gap: 1px;
  margin-left: 14px;
  width: 1871px;
  height: 748px;
  box-sizing: border-box;
  border: 1px solid var(--ln);
  border-bottom: 0;
  background: var(--ln);
}

.map div {
  min-width: 0;
  min-height: 0;
  box-sizing: border-box;
}

.r, .c {
  display: flex;
  gap: 1px;
  background: var(--ln);
}

.r { flex-direction: row; }
.c { flex-direction: column; }

.bd { flex: 1 1 0; }

.hd {
  flex: 0 0 22px;
  display: flex;
  justify-content: center;
  align-items: center;
  background: #f7f7f7;
  color: #111;
  white-space: nowrap;
  font-family: "DejaVu Sans", sans-serif;
}

.hd span {
  flex: none;
  direction: rtl;
  unicode-bidi: isolate;
}

.h1  { font-size: 19px; }
.h1b { font-size: 16px; }
.hx  { font-size: 20px; }
.h2  { font-size: 15px; }
.h3  { font-size: 9px; }
.h4  { font-size: 7px; }
.h5  { font-size: 4px; }

.t {
  display: flex;
  flex-direction: column;
  align-items: center;
  overflow: hidden;
  color: #ffffff;
  white-space: nowrap;
}

.t::before {
  content: "";
  flex: 44 1 0;
}

.t::after {
  content: "";
  flex: 22 1 0;
}

.t b {
  flex: none;
  font-weight: normal;
  line-height: 0;
  direction: rtl;
  unicode-bidi: isolate;
  font-family: "DejaVu Sans", sans-serif;
}

.t i {
  flex: 34 1 0;
  display: flex;
  align-items: flex-end;
  font-style: normal;
  line-height: 0;
  font-size: 0.95em;
  font-family: "Noto Sans", "DejaVu Sans", sans-serif;
}

.w { background: #ffffff; }

.g  { background: #21a800; }
.b  { background: #2bd400; }
.b2 { background: #33ff00; }
.d1 { background: #1a7a00; }
.d0 { background: #004b00; }
.r1 { background: #780000; }
.r0 { background: #3e0000; }
.r0b { background: #480000; }

.s1  { font-size: 36px; }
.s2  { font-size: 30px; }
.s3  { font-size: 26px; }
.s4  { font-size: 22px; }
.s5  { font-size: 20px; }
.s6  { font-size: 17px; }
.s7  { font-size: 15px; }
.s8  { font-size: 13px; }
.s9  { font-size: 11px; }
.s10 { font-size: 9px; }
.s11 { font-size: 7px; }
.s12 { font-size: 5px; }
```
